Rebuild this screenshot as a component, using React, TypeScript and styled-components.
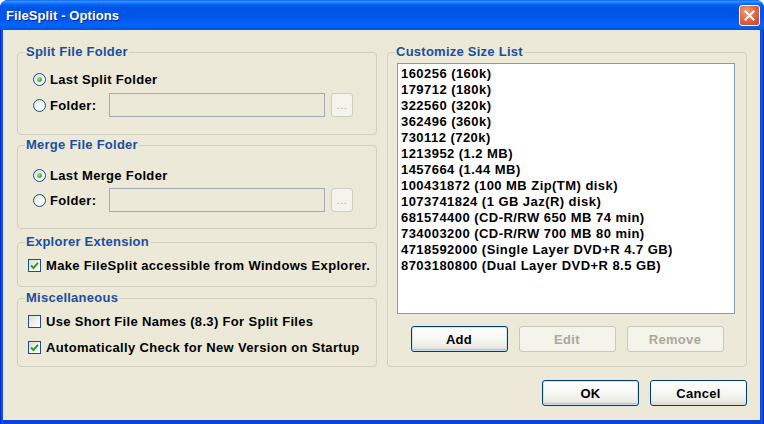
import React from "react";
import styled, { createGlobalStyle } from "styled-components";

const Global = createGlobalStyle`
  html, body { margin: 0; padding: 0; background: #ffffff; }
  body { font-family: "Liberation Sans", Arial, sans-serif; }
`;

const FONT = `"Liberation Sans", Arial, sans-serif`;

const Window = styled.div`
  width: 764px;
  height: 424px;
  box-sizing: border-box;
  display: flex;
  flex-direction: column;
  background: linear-gradient(to right, #0019c0 0, #1660ec 2px, #0a45d8 3px, #0a45d8 760px, #1a5ae8 762px, #0019b8 764px);
  border-radius: 8px 8px 0 0;
  overflow: hidden;
`;

const TitleBar = styled.div`
  height: 30px;
  flex: none;
  display: flex;
  align-items: center;
  justify-content: space-between;
  padding: 0 4px 0 6px;
  background: linear-gradient(
    to bottom,
    #0a5cf0 0%,
    #3a93ff 4%,
    #2a8aff 7%,
    #127dff 10%,
    #0468f8 14%,
    #0058e8 22%,
    #0055e3 30%,
    #0056ea 58%,
    #005cf4 70%,
    #0365fb 82%,
    #0060ef 92%,
    #0052d8 100%
  );
`;

const Title = styled.span`
  color: #ffffff;
  font: bold 13px ${FONT};
  text-shadow: 1px 1px 0 #0b2a9a;
  letter-spacing: 0.1px;
`;

const CloseButton = styled.div`
  width: 21px;
  height: 21px;
  box-sizing: border-box;
  border: 1px solid #ffffff;
  border-radius: 3px;
  background: radial-gradient(circle at 35% 30%, #f0a080 0%, #e06a48 45%, #c8401e 100%);
  display: flex;
  align-items: center;
  justify-content: center;
`;

const Body = styled.div`
  flex: 1;
  margin: 0 4px 4px 3px;
  background: #ece9d8;
  padding: 14px 13px 0 14px;
  display: flex;
  flex-direction: column;
`;

const Columns = styled.div`
  display: grid;
  grid-template-columns: 360px 360px;
  column-gap: 10px;
  height: 323px;
`;

const Column = styled.div`
  display: flex;
  flex-direction: column;
`;

const Group = styled.fieldset<{ $h: number; $mt?: number }>`
  margin: ${(p) => p.$mt ?? 0}px 0 0 0;
  padding: 0;
  height: ${(p) => p.$h}px;
  box-sizing: border-box;
  border: 1px solid #d0d0bf;
  border-radius: 4px;
  min-width: 0;
  flex: none;
`;

const Legend = styled.legend`
  margin-left: 7px;
  padding: 0 1px;
  font: bold 13px/16px ${FONT};
  letter-spacing: 0.25px;
  color: #1a4f9f;
`;

const GroupContent = styled.div<{ $pt: number; $pl: number; $gap: number }>`
  display: flex;
  flex-direction: column;
  gap: ${(p) => p.$gap}px;
  padding: ${(p) => p.$pt}px 0 0 ${(p) => p.$pl}px;
`;

const Row = styled.div`
  display: flex;
  align-items: center;
`;

const Option = styled.label<{ $w?: number; $gap: number }>`
  display: flex;
  align-items: center;
  gap: ${(p) => p.$gap}px;
  height: 20px;
  width: ${(p) => (p.$w ? `${p.$w}px` : "auto")};
  flex: none;
  font: bold 13px ${FONT};
  letter-spacing: 0.33px;
  color: #000000;
  white-space: nowrap;
`;

const Radio = styled.span<{ $on?: boolean }>`
  width: 13px;
  height: 13px;
  box-sizing: border-box;
  border-radius: 50%;
  border: 1px solid #1c5180;
  background: radial-gradient(circle at 65% 65%, #ffffff 0%, #f4f4f0 45%, #d8d8d0 100%);
  display: flex;
  align-items: center;
  justify-content: center;
  flex: none;
  &::after {
    content: "";
    width: 5px;
    height: 5px;
    border-radius: 50%;
    background: radial-gradient(circle at 35% 35%, #a4ec9e 0%, #3cbc34 55%, #21a121 100%);
    display: ${(p) => (p.$on ? "block" : "none")};
  }
`;

const Check = styled.span`
  width: 13px;
  height: 13px;
  box-sizing: border-box;
  border: 1px solid #1c5180;
  background: linear-gradient(135deg, #dcdcd7 0%, #f4f4f0 60%, #ffffff 100%);
  display: flex;
  align-items: center;
  justify-content: center;
  flex: none;
`;

const PathInput = styled.div`
  width: 216px;
  height: 24px;
  box-sizing: border-box;
  border: 1px solid #a3acb6;
  background: #ece9d8;
  flex: none;
`;

const Browse = styled.div`
  width: 22px;
  height: 24px;
  margin-left: 6px;
  box-sizing: border-box;
  border: 1px solid #cfcdc0;
  border-radius: 3px;
  background: #f5f4ea;
  color: #aca899;
  font: 11px ${FONT};
  display: flex;
  align-items: flex-end;
  justify-content: center;
  padding-bottom: 5px;
  letter-spacing: 0.5px;
  flex: none;
`;

const ListBox = styled.div`
  margin: 3px 0 0 9px;
  width: 338px;
  height: 251px;
  box-sizing: border-box;
  border: 1px solid #7f9db9;
  background: #ffffff;
  padding: 2px 3px;
`;

const ListItem = styled.div`
  font: bold 13px/16px ${FONT};
  letter-spacing: 0.45px;
  color: #000000;
  white-space: nowrap;
`;

const ButtonRow = styled.div<{ $justify: string; $mt: number }>`
  display: flex;
  justify-content: ${(p) => p.$justify};
  gap: 11px;
  margin-top: ${(p) => p.$mt}px;
`;

const Button = styled.button<{ $default?: boolean }>`
  width: 97px;
  height: 26px;
  box-sizing: border-box;
  padding: 0;
  font: bold 13px ${FONT};
  letter-spacing: 0.3px;
  color: #000000;
  border: 1px solid #003c74;
  border-radius: 3px;
  background: linear-gradient(to bottom, #ffffff 0%, #f7f7f4 45%, #eeede6 80%, #dcd7cb 100%);
  box-shadow: ${(p) =>
    p.$default ? "inset 0 0 0 1px #cde3fb, inset 0 -2px 0 0 #a9c6ef" : "inset 0 -2px 0 0 #e2ded2"};
  &:disabled {
    border-color: #cbc8bb;
    background: #f5f4ea;
    color: #aca899;
    box-shadow: none;
  }
`;

const CheckMark = () => (
  <svg width="9" height="9" viewBox="0 0 9 9">
    <polyline points="1,4.5 3.5,7 8,1.8" fill="none" stroke="#21a121" strokeWidth="2" />
  </svg>
);

const CloseX = () => (
  <svg width="11" height="11" viewBox="0 0 11 11">
    <path d="M1.5 1.5 L9.5 9.5 M9.5 1.5 L1.5 9.5" stroke="#ffffff" strokeWidth="2" strokeLinecap="square" />
  </svg>
);

const sizes = [
  "160256 (160k)",
  "179712 (180k)",
  "322560 (320k)",
  "362496 (360k)",
  "730112 (720k)",
  "1213952 (1.2 MB)",
  "1457664 (1.44 MB)",
  "100431872 (100 MB Zip(TM) disk)",
  "1073741824 (1 GB Jaz(R) disk)",
  "681574400 (CD-R/RW 650 MB 74 min)",
  "734003200 (CD-R/RW 700 MB 80 min)",
  "4718592000 (Single Layer DVD+R 4.7 GB)",
  "8703180800 (Dual Layer DVD+R 8.5 GB)",
];

function FolderGroup(props: { title: string; last: string; h: number; mt?: number; pt: number; gap: number }) {
  return (
    <Group $h={props.h} $mt={props.mt}>
      <Legend>{props.title}</Legend>
      <GroupContent $pt={props.pt} $pl={15} $gap={props.gap}>
        <Option $gap={4}>
          <Radio $on />
          {props.last}
        </Option>
        <Row>
          <Option $gap={4} $w={76}>
            <Radio />
            Folder:
          </Option>
          <PathInput />
          <Browse>...</Browse>
        </Row>
      </GroupContent>
    </Group>
  );
}

export default function App() {
  return (
    <>
      <Global />
      <Window>
        <TitleBar>
          <Title>FileSplit - Options</Title>
          <CloseButton>
            <CloseX />
          </CloseButton>
        </TitleBar>
        <Body>
          <Columns>
            <Column>
              <FolderGroup title="Split File Folder" last="Last Split Folder" h={91} pt={9} gap={4} />
              <FolderGroup title="Merge File Folder" last="Last Merge Folder" h={92} mt={2} pt={12} gap={3} />
              <Group $h={53} $mt={5}>
                <Legend>Explorer Extension</Legend>
                <GroupContent $pt={5} $pl={10} $gap={0}>
                  <Option $gap={5}>
                    <Check>
                      <CheckMark />
                    </Check>
                    Make FileSplit accessible from Windows Explorer.
                  </Option>
                </GroupContent>
              </Group>
              <Group $h={77} $mt={3}>
                <Legend>Miscellaneous</Legend>
                <GroupContent $pt={5} $pl={10} $gap={6}>
                  <Option $gap={5}>
                    <Check />
                    Use Short File Names (8.3) For Split Files
                  </Option>
                  <Option $gap={5}>
                    <Check>
                      <CheckMark />
                    </Check>
                    Automatically Check for New Version on Startup
                  </Option>
                </GroupContent>
              </Group>
            </Column>
            <Column>
              <Group $h={323}>
                <Legend>Customize Size List</Legend>
                <ListBox>
                  {sizes.map((s) => (
                    <ListItem key={s}>{s}</ListItem>
                  ))}
                </ListBox>
                <ButtonRow $justify="center" $mt={12}>
                  <Button $default>Add</Button>
                  <Button disabled>Edit</Button>
                  <Button disabled>Remove</Button>
                </ButtonRow>
              </Group>
            </Column>
          </Columns>
          <ButtonRow $justify="flex-end" $mt={13}>
            <Button $default>OK</Button>
            <Button>Cancel</Button>
          </ButtonRow>
        </Body>
      </Window>
    </>
  );
}
